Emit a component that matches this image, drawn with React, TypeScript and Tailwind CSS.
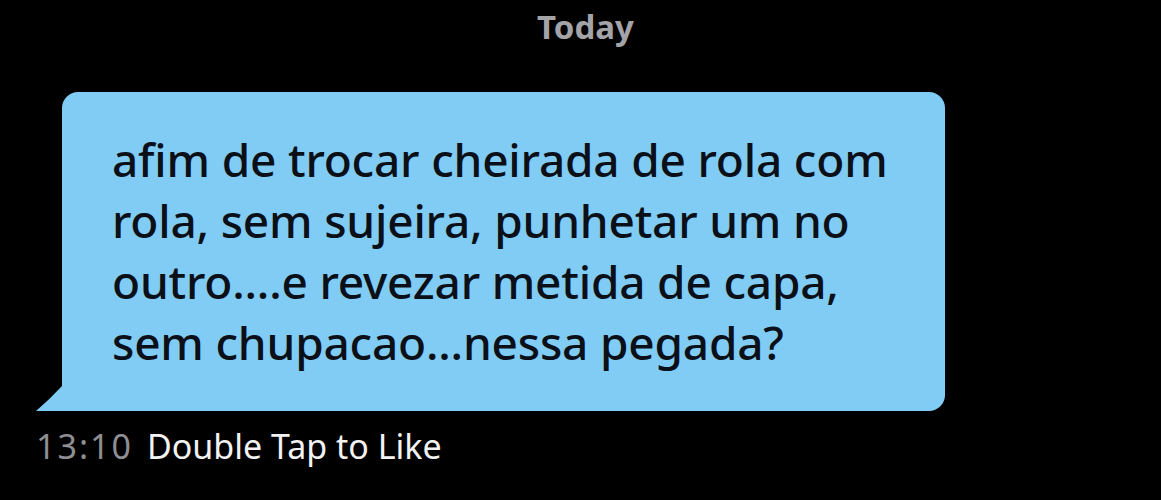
const LINES = [
  "afim de trocar cheirada de rola com",
  "rola, sem sujeira, punhetar um no",
  "outro....e revezar metida de capa,",
  "sem chupacao...nessa pegada?",
];

export default function App() {
  return (
    <div className="h-[500px] w-[1161px] overflow-hidden bg-black font-['Noto_Sans',sans-serif]">
      <div className="pt-[7px] text-center text-[33px] font-bold leading-[40px] text-[#a3a3a8] pl-[10px]">
        Today
      </div>
      <div className="relative ml-[62px] mt-[45px] w-[883px] rounded-[16px] rounded-bl-none bg-[#80ccf5] pb-[38px] pl-[50px] pt-[37px]">
        {LINES.map((line) => (
          <div key={line} className="text-[46px] font-medium leading-[61px] tracking-[-0.2px] text-[#0b1018]">
            {line}
          </div>
        ))}
        <svg className="absolute bottom-0 left-[-26px]" width="27" height="26" viewBox="0 0 27 26">
          <path d="M27 0 L27 26 L0 26 Q14 14 27 0 Z" fill="#80ccf5" />
        </svg>
      </div>
      <div className="ml-[36px] mt-[15px] flex items-baseline gap-[14px] text-[34px] leading-[40px]">
        <span className="tracking-[2px] text-[#8e8e93]">13:10</span>
        <span className="text-[#f2f2f2]">Double Tap to Like</span>
      </div>
    </div>
  );
}
